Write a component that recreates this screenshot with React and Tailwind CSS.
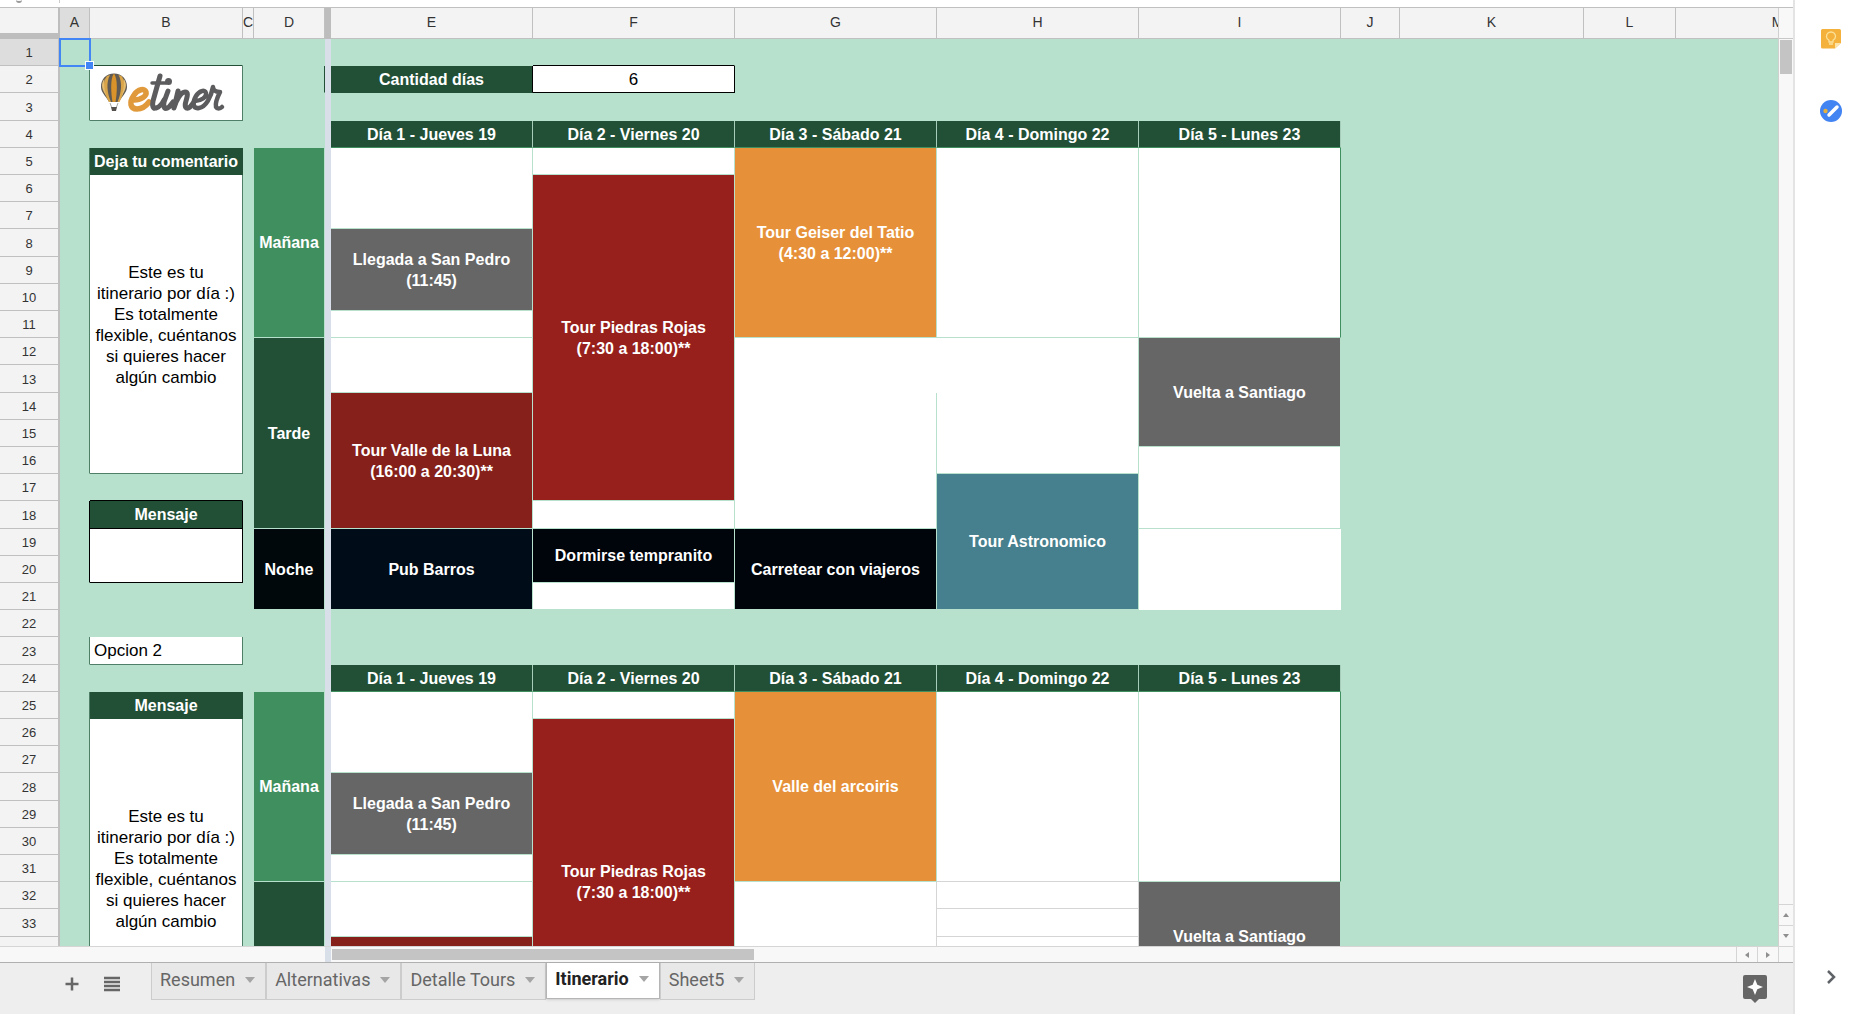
import React from "react";

const ROWS = 37;

const COLUMNS = [
  ["A", "w-[30px]"],
  ["B", "w-[153px]"],
  ["C", "w-[11px]"],
  ["D", "w-[71px]"],
  ["", "w-[6px]"],
  ["E", "w-[202px]"],
  ["F", "w-[202px]"],
  ["G", "w-[202px]"],
  ["H", "w-[202px]"],
  ["I", "w-[202px]"],
  ["J", "w-[59px]"],
  ["K", "w-[184px]"],
  ["L", "w-[92px]"],
  ["M", "w-[204px]"],
];

const BOLD = "text-white font-bold text-base/[21px]";
const PAGE = "bg-[#b7e1cd] border-[#b7e1cd]";
const TITLE = "bg-[#215037] border-[#215037] " + BOLD;
const DAY = "bg-[#215037] border-r-[#a5cdb9] border-b-[#3f8f5f] " + BOLD;
const WHITE = "bg-white border-[#b7e1cd]";
const PLAIN = "bg-white border-white";
const LINED = "bg-white border-b-[#d5d5d5] border-r-[#d5d5d5]";
const MORNING_END = "bg-white border-b-[#b7e1cd] border-r-[#3f8f5f]";
const BOX = "bg-white border-[#4f8067]";
const EVENT = "border-[#b7e1cd] " + BOLD;
const GREY = EVENT + " bg-[#666666]";
const RED = EVENT + " bg-[#97201c]";
const WINE = EVENT + " bg-[#85201a]";
const ORANGE = EVENT + " bg-[#e69139]";
const TEAL = EVENT + " bg-[#467f8d]";
const NAVY = EVENT + " bg-[#000c17]";
const BLACK = EVENT + " bg-[#00050b]";
const MORNING = EVENT + " bg-[#3f8f5f]";
const AFTERNOON = EVENT + " bg-[#215037]";
const NIGHT = EVENT + " bg-[#00080c]";

const NOTE =
  "Este es tu itinerario por día :) Es totalmente flexible, cuéntanos si quieres hacer algún cambio";

// Each entry: [column, first row, last row, style, content]
const BLOCKS = [
  ["A", 2, 3, "bg-[#b7e1cd] border-b-[#b7e1cd] border-r-[#4f8067]", ""],
  ["A", 5, 16, "bg-[#b7e1cd] border-b-[#b7e1cd] border-r-[#4f8067]", ""],
  ["A", 18, 20, "bg-[#b7e1cd] border-b-[#b7e1cd] border-r-black", ""],
  ["A", 23, 23, "bg-[#b7e1cd] border-b-[#b7e1cd] border-r-[#4f8067]", ""],
  ["A", 25, 36, "bg-[#b7e1cd] border-b-[#b7e1cd] border-r-[#4f8067]", ""],
  ["B", 1, 1, "bg-[#b7e1cd] border-r-[#b7e1cd] border-b-[#215037]", ""],
  ["B", 2, 3, BOX, "logo"],
  ["B", 5, 5, TITLE, "Deja tu comentario"],
  ["B", 6, 16, BOX, NOTE],
  ["B", 17, 17, "bg-[#b7e1cd] border-r-[#b7e1cd] border-b-black", ""],
  ["B", 18, 18, "bg-[#215037] border-black " + BOLD, "Mensaje"],
  ["B", 19, 20, "bg-white border-black", ""],
  ["B", 23, 23, BOX + " text-left", "Opcion 2"],
  ["B", 25, 25, TITLE, "Mensaje"],
  ["B", 26, 36, BOX, NOTE],
  ["D", 2, 2, "bg-[#b7e1cd] border-b-[#b7e1cd] border-r-[#215037]", ""],
  ["D", 5, 11, MORNING, "Mañana"],
  ["D", 12, 18, AFTERNOON, "Tarde"],
  ["D", 19, 21, NIGHT, "Noche"],
  ["D", 25, 31, MORNING, "Mañana"],
  ["D", 32, 37, AFTERNOON, ""],
  ["E", 2, 2, TITLE + " border-r-black", "Cantidad días"],
  ["F", 1, 1, "bg-[#b7e1cd] border-r-[#b7e1cd] border-b-black", ""],
  ["F", 2, 2, "bg-white border-black", "6"],
  ["E", 4, 4, DAY, "Día 1 - Jueves 19"],
  ["F", 4, 4, DAY, "Día 2 - Viernes 20"],
  ["G", 4, 4, DAY, "Día 3 - Sábado 21"],
  ["H", 4, 4, DAY, "Día 4 - Domingo 22"],
  ["I", 4, 4, DAY, "Día 5 - Lunes 23"],
  ["E", 5, 7, WHITE, ""],
  ["E", 8, 10, GREY, "Llegada a San Pedro\n(11:45)"],
  ["E", 11, 11, WHITE, ""],
  ["E", 12, 13, WHITE, ""],
  ["E", 14, 18, WINE, "Tour Valle de la Luna\n(16:00 a 20:30)**"],
  ["E", 19, 21, NAVY, "Pub Barros"],
  ["F", 5, 5, WHITE, ""],
  ["F", 6, 17, RED, "Tour Piedras Rojas\n(7:30 a 18:00)**"],
  ["F", 18, 18, WHITE, ""],
  ["F", 19, 20, BLACK, "Dormirse tempranito"],
  ["F", 21, 21, WHITE, ""],
  ["G", 5, 11, ORANGE, "Tour Geiser del Tatio\n(4:30 a 12:00)**"],
  ["G", 12, 13, PLAIN, ""],
  ["G", 14, 18, WHITE, ""],
  ["G", 19, 21, BLACK, "Carretear con viajeros"],
  ["H", 5, 11, WHITE, ""],
  ["H", 12, 16, WHITE, ""],
  ["H", 17, 21, TEAL, "Tour Astronomico"],
  ["I", 5, 11, MORNING_END, ""],
  ["I", 12, 15, GREY, "Vuelta a Santiago"],
  ["I", 16, 18, WHITE, ""],
  ["I", 19, 21, PLAIN, ""],
  ["E", 24, 24, DAY, "Día 1 - Jueves 19"],
  ["F", 24, 24, DAY, "Día 2 - Viernes 20"],
  ["G", 24, 24, DAY, "Día 3 - Sábado 21"],
  ["H", 24, 24, DAY, "Día 4 - Domingo 22"],
  ["I", 24, 24, DAY, "Día 5 - Lunes 23"],
  ["E", 25, 27, WHITE, ""],
  ["E", 28, 30, GREY, "Llegada a San Pedro\n(11:45)"],
  ["E", 31, 31, WHITE, ""],
  ["E", 32, 33, WHITE, ""],
  ["E", 34, 37, WINE, ""],
  ["F", 25, 25, WHITE, ""],
  ["F", 26, 37, RED, "Tour Piedras Rojas\n(7:30 a 18:00)**"],
  ["G", 25, 31, ORANGE, "Valle del arcoiris"],
  ["G", 32, 37, LINED, ""],
  ["H", 25, 31, "bg-white border-b-[#d5d5d5] border-r-[#b7e1cd]", ""],
  ["H", 32, 32, LINED, ""],
  ["H", 33, 33, LINED, ""],
  ["H", 34, 37, LINED, ""],
  ["I", 25, 31, MORNING_END, ""],
  ["I", 32, 35, GREY, "Vuelta a Santiago"],
  ["I", 36, 37, WHITE, ""],
];

function Logo() {
  return (
    <svg viewBox="0 0 152 52" className="block h-[52px] w-full" role="img" aria-label="etiner">
      <path d="M24 6.500C16 6.500 11 12 11 20c0 6 6 10 8 15h10c2-5 8-9 8-15 0-8-5-13.500-13-13.500z" fill="#5f5a53" />
      <path d="M17 9c-5 6-4 16 2 26h2c-4-9-5-20-1-27z" fill="#d9a548" />
      <path d="M24 6.500c-4 5-3 20-1.500 28.500h3C27 26 28 12 24 6.500z" fill="#d9932a" />
      <path d="M28.500 8c4 7 3 18-1 27h2c5-9 7-20 2-26z" fill="#d9a548" />
      <path d="M13.500 13c-3 5-1 11 3 16-2-6-3-11-2-17zM34.500 13c3 5 1 11-3 16 2-6 3-11 2-17z" fill="#e5bd70" />
      <path d="M20 36l1.500 4M28 36l-1.500 4" stroke="#a9a59f" strokeWidth="1" />
      <path d="M21 40h6l-1 4h-4z" fill="#55504c" />
      <g fill="none" strokeLinecap="round" strokeLinejoin="round">
        <path d="M44 33c7 0 13-4 12-8-1-4-8-3-12 3-5 7-4 14 3 14 5 0 9-3 12-7" stroke="#e09a3b" strokeWidth="5.500" />
        <path d="M62 16h14" stroke="#5c5c5e" strokeWidth="3.500" />
        <path d="M70 9L63 34c-1 5 0 8 3 7 4-1 6-4 8-8" stroke="#5c5c5e" strokeWidth="5" />
        <path d="M78 24l-4 11c-1 6 1 8 5 5l4-5M88 24l-4 17c2-8 7-16 11-16 4 0 2 5 1 9-2 6 0 9 4 6l4-5" stroke="#5c5c5e" strokeWidth="5" />
        <path d="M105 34c6 0 12-4 11-8-1-4-7-2-10 3-4 7-3 13 3 12 7-1 12-11 14-21 0 4 3 5 7 5-3 6-5 11-4 15 1 2 4 2 6 0" stroke="#5c5c5e" strokeWidth="4.500" />
      </g>
      <circle cx="78.500" cy="14.500" r="3.500" fill="#5c5c5e" />
    </svg>
  );
}

function cellPadding(column, content) {
  if (content === "logo") return "p-0";
  if (content === NOTE) return "px-[5px] pt-0.5 pb-0";
  if (column === "B" && content !== "Opcion 2") return "p-0";
  if (column === "D") return "p-0";
  return "px-1 py-0";
}

function Cell({ block }) {
  const [column, from, to, style, content] = block;
  return (
    <td
      rowSpan={to - from + 1}
      className={
        "border-r border-b text-center align-middle whitespace-pre-line " + cellPadding(column, content) + " " + style
      }
    >
      {content === "logo" ? <Logo /> : content}
    </td>
  );
}

function Sheet() {
  const rows = Array.from({ length: ROWS }, (_, i) => i + 1);
  return (
    <table className="w-[1880px] shrink-0 table-fixed border-separate border-spacing-0 text-[17px] leading-[21px] text-black">
      <colgroup>
        <col className="w-[60px]" />
        {COLUMNS.map(([name, width], i) => (
          <col key={i} className={width} />
        ))}
      </colgroup>
      <thead>
        <tr className="h-[31px] text-[14px] leading-4 text-[#333]">
          <th className="border-r-2 border-b-[6px] border-[#bdbdbd] bg-[#f3f3f3] p-0" />
          {COLUMNS.map(([name], i) =>
            name ? (
              <th
                key={i}
                scope="col"
                className={
                  "border-r border-b border-[#c0c0c0] px-0 pt-0 pb-0.5 font-normal " +
                  (name === "A" ? "bg-[#dddddd]" : "bg-[#f3f3f3]")
                }
              >
                {name}
              </th>
            ) : (
              <th key={i} className="bg-[#bdbdbd] p-0" />
            )
          )}
        </tr>
      </thead>
      <tbody>
        {rows.map((row) => (
          <tr key={row} className={row % 5 === 3 ? "h-7" : "h-[27px]"}>
            <th
              scope="row"
              className={
                "border-r-2 border-b border-[#c0c0c0] px-0 pt-0.5 pb-0 text-[13px] leading-4 font-normal text-[#333] " +
                (row === 1 ? "bg-[#dddddd]" : "bg-[#f3f3f3]")
              }
            >
              {row}
            </th>
            {COLUMNS.map(([name], i) => {
              if (!name) return <td key={i} className="bg-[#d9dfe8] p-0" />;
              const block = BLOCKS.find((b) => b[0] === name && row >= b[1] && row <= b[2]);
              if (block) return block[1] === row ? <Cell key={i} block={block} /> : null;
              if (name === "A" && row === 1) {
                return (
                  <td key={i} className="relative bg-[#b7e1cd] p-0 outline-2 -outline-offset-1 outline-[#4285f4]">
                    <span className="absolute -right-1 -bottom-1 z-10 size-[9px] border border-white bg-[#4285f4]" />
                  </td>
                );
              }
              return <td key={i} className={"p-0 " + PAGE} />;
            })}
          </tr>
        ))}
      </tbody>
    </table>
  );
}

function Arrow({ d }) {
  return (
    <svg viewBox="0 0 8 8" className="size-2" aria-hidden="true">
      <path d={d} fill="#8f8f8f" />
    </svg>
  );
}

function VerticalScroll() {
  const button = "flex h-[21px] items-center justify-center border-t border-[#d5d5d5]";
  return (
    <div className="flex w-[15px] shrink-0 flex-col border-l border-[#d0d0d0] bg-[#f8f8f8]">
      <div className="h-[31px] border-b border-[#c8c8c8]" />
      <div className="flex-1 px-px py-px">
        <div className="h-[34px] bg-[#c4c4c4]" />
      </div>
      <button aria-label="Subir" className={button}>
        <Arrow d="M1 6L4 2l3 4z" />
      </button>
      <button aria-label="Bajar" className={button}>
        <Arrow d="M1 2h6L4 6z" />
      </button>
    </div>
  );
}

function HorizontalScroll() {
  const button = "flex w-[21px] items-center justify-center border-l border-[#d5d5d5]";
  return (
    <div className="flex h-[17px] shrink-0 border-t border-b border-t-[#d5d5d5] border-b-[#b0b0b0] bg-[#f8f8f8]">
      <div className="w-[325px]" />
      <div className="w-1.5 bg-[#d9dfe8]" />
      <div className="flex-1 px-px py-0.5">
        <div className="h-full w-[422px] bg-[#c4c4c4]" />
      </div>
      <button aria-label="Izquierda" className={button}>
        <Arrow d="M6 1v6L2 4z" />
      </button>
      <button aria-label="Derecha" className={button}>
        <Arrow d="M2 1l4 3-4 3z" />
      </button>
      <div className="w-[15px] border-l border-[#d5d5d5]" />
    </div>
  );
}

function Tabs() {
  const names = ["Resumen", "Alternativas", "Detalle Tours", "Itinerario", "Sheet5"];
  return (
    <div className="flex h-[51px] shrink-0 bg-[#eeeeee]">
      <div className="flex h-[42px] w-[151px] items-center gap-6 pl-16">
        <button aria-label="Añadir hoja">
          <svg viewBox="0 0 16 16" className="size-4">
            <path d="M8 1.500v13M1.500 8h13" stroke="#666" strokeWidth="2.500" fill="none" />
          </svg>
        </button>
        <button aria-label="Todas las hojas">
          <svg viewBox="0 0 16 16" className="size-4">
            <path d="M0 2h16M0 6h16M0 10h16M0 14h16" stroke="#666" strokeWidth="2.500" fill="none" />
          </svg>
        </button>
      </div>
      <div className="flex items-start font-[Roboto,sans-serif] text-lg leading-6">
        {names.map((name) => (
          <button
            key={name}
            className={
              "flex items-center gap-2.5 border border-t-0 px-2 " +
              (name === "Itinerario"
                ? "h-9 border-[#b5b5b5] bg-white pr-2.5 pb-1 font-bold text-[#222] shadow-sm"
                : "h-[37px] border-[#cccccc] bg-[#e8e8e8] pr-2.5 pb-0.5 text-[#666]")
            }
          >
            {name}
            <svg viewBox="0 0 10 6" className="h-1.5 w-2.5" aria-hidden="true">
              <path d="M0 0h10L5 6z" fill="#a5a5a5" />
            </svg>
          </button>
        ))}
      </div>
      <div className="flex flex-1 items-start justify-end pt-3 pr-[26px]">
        <button aria-label="Explorar">
          <svg viewBox="0 0 24 28" className="h-7 w-6">
            <path d="M2 0h20a2 2 0 012 2v20a2 2 0 01-2 2h-6l-4 4-4-4H2a2 2 0 01-2-2V2a2 2 0 012-2z" fill="#666" />
            <path d="M12 4l2.300 5.700L20 12l-5.700 2.300L12 20l-2.300-5.700L4 12l5.700-2.300z" fill="#fff" />
          </svg>
        </button>
      </div>
    </div>
  );
}

function SidePanel() {
  return (
    <aside className="flex w-[73px] shrink-0 flex-col items-center border-l-2 border-[#e4e4e4] bg-white pt-[29px] pb-[25px]">
      <button aria-label="Keep">
        <svg viewBox="0 0 20 20" className="size-5">
          <path d="M1.500 0h17A1.500 1.500 0 0120 1.500V14l-6 5.500H1.500A1.500 1.500 0 010 18V1.500A1.500 1.500 0 011.500 0z" fill="#f4b23c" />
          <path d="M20 14l-6 5.500V14z" fill="#fce3a8" />
          <path d="M8 13v-1.800C6.300 10.300 5.500 9 5.500 7.500a4.500 4.500 0 019 0c0 1.500-.8 2.800-2.500 3.700V13zM8 15h4" fill="none" stroke="#fbe19a" strokeWidth="1.300" />
        </svg>
      </button>
      <button aria-label="Tasks" className="mt-[51px]">
        <svg viewBox="0 0 22 22" className="size-[22px]">
          <circle cx="11" cy="11" r="11" fill="#4384f3" />
          <path d="M9 15l8-8" stroke="#fff" strokeWidth="3.500" strokeLinecap="round" />
          <circle cx="5.500" cy="11" r="2.200" fill="#e5b03c" />
        </svg>
      </button>
      <div className="flex-1" />
      <button aria-label="Ocultar panel">
        <svg viewBox="0 0 24 24" className="size-6">
          <path d="M9 6l6 6-6 6" stroke="#5f6368" strokeWidth="2.500" fill="none" />
        </svg>
      </button>
    </aside>
  );
}

export default function App() {
  return (
    <div className="flex h-screen overflow-hidden bg-white font-['Liberation_Sans',Arial,sans-serif]">
      <main className="flex min-w-0 flex-1 flex-col">
        <div className="flex h-2 shrink-0 border-b border-[#c0c0c0]">
          <div className="flex w-[59px] items-start pl-4">
            <span className="h-[3px] w-1.5 rounded-b-full border-b-2 border-[#999]" />
          </div>
          <div className="h-[3px] w-px bg-[#ccc]" />
        </div>
        <div className="flex min-h-0 flex-1">
          <div className="flex min-w-0 flex-1 items-start overflow-hidden">
            <Sheet />
          </div>
          <VerticalScroll />
        </div>
        <HorizontalScroll />
        <Tabs />
      </main>
      <SidePanel />
    </div>
  );
}
